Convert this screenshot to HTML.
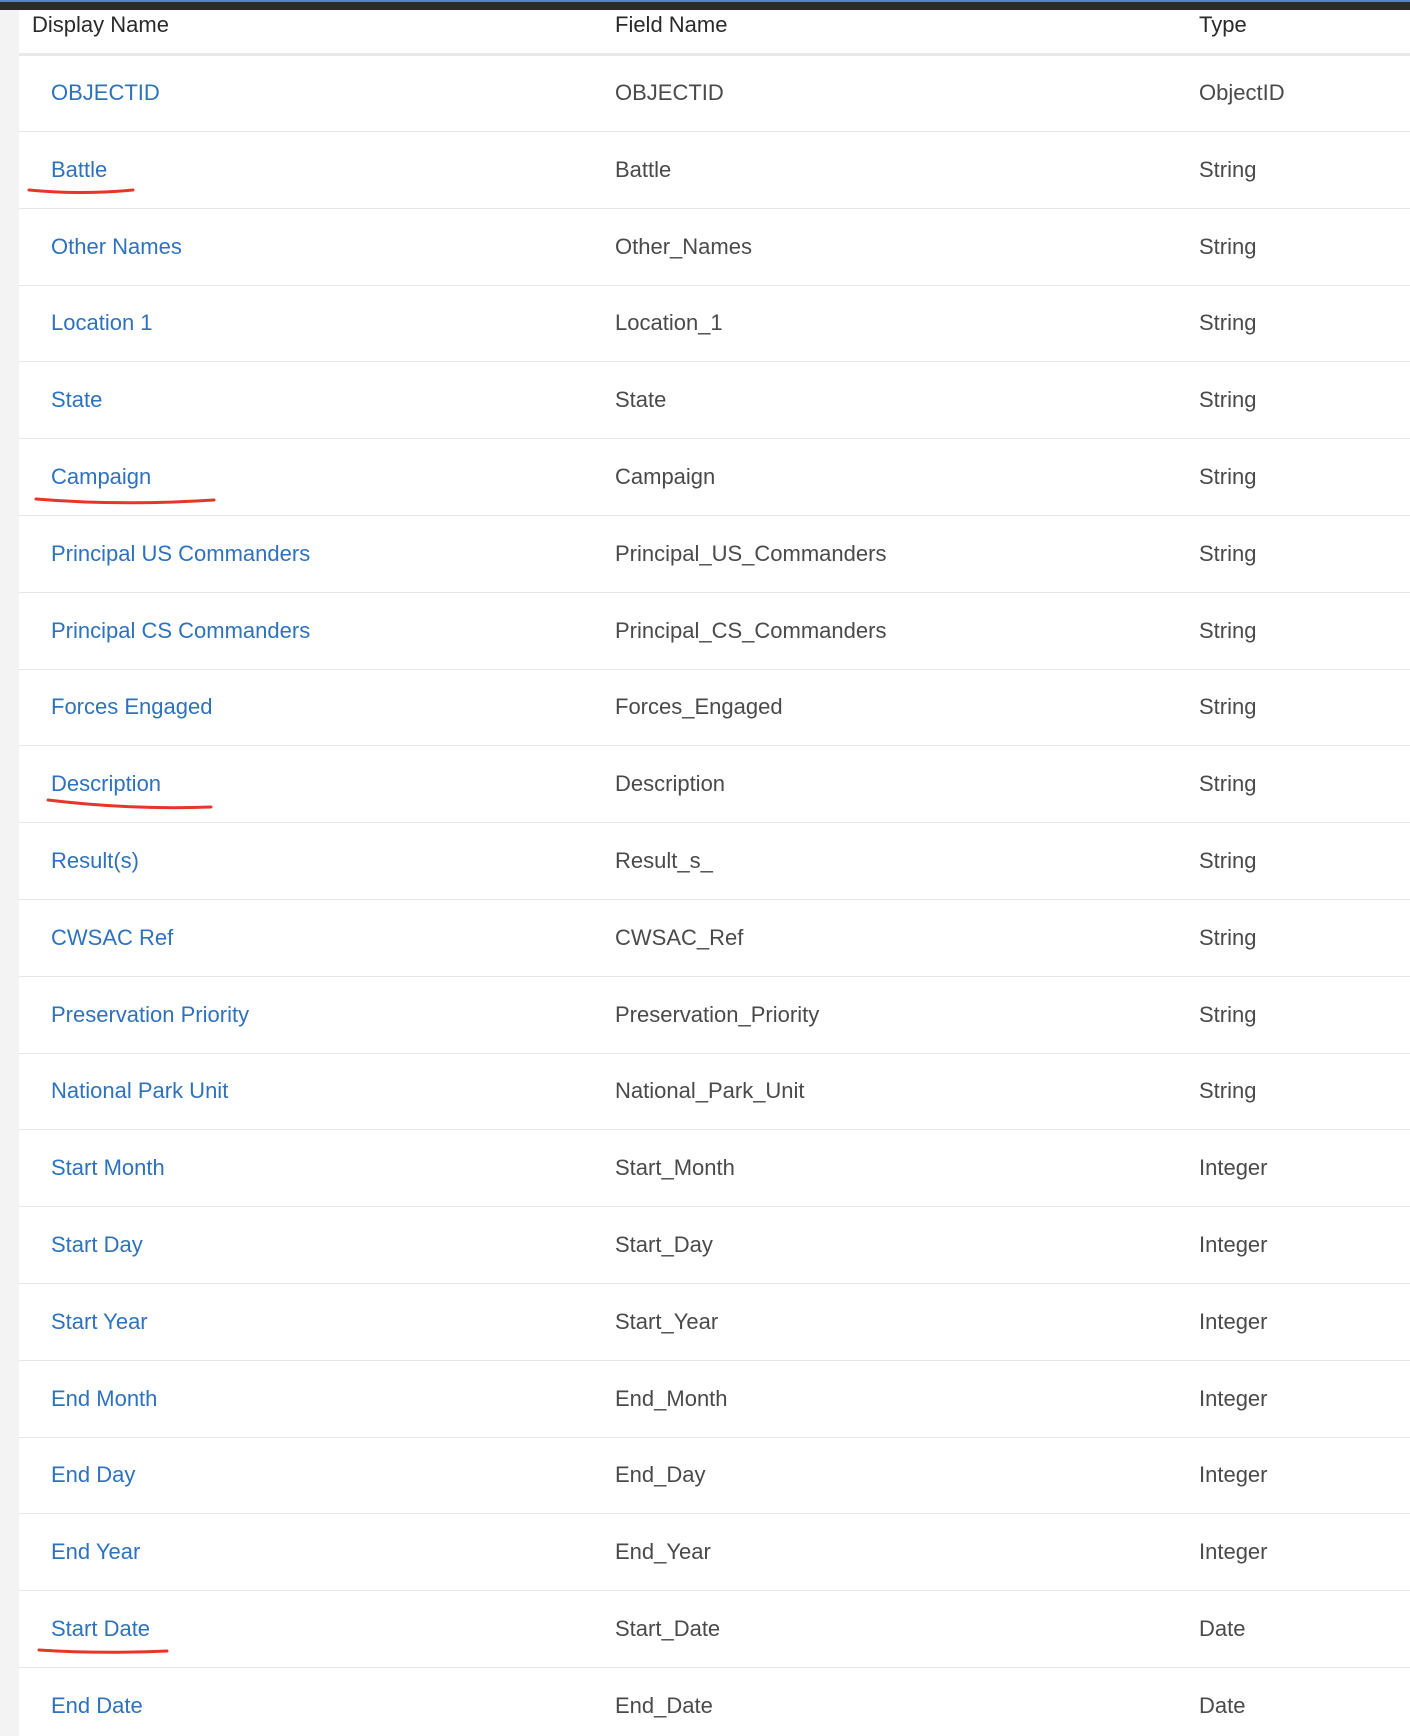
<!DOCTYPE html>
<html><head><meta charset="utf-8"><style>
html,body{margin:0;padding:0;width:1410px;height:1736px;overflow:hidden;background:#fff;font-family:"Liberation Sans",sans-serif;position:relative}
.top1{position:absolute;left:0;top:0;width:1410px;height:2px;background:#5b7fd0}
.top2{position:absolute;left:0;top:2px;width:1410px;height:8px;background:#2b2b2b}
.strip{position:absolute;left:0;top:10px;width:19px;height:1726px;background:#f3f3f3}
.hdr{position:absolute;left:19px;top:10px;width:1391px;height:43px;border-bottom:3px solid #e8e8e8}
.hdr span{position:absolute;top:1px;font-size:22px;color:#2a2a2a;line-height:28px}
.b{position:absolute;left:19px;width:1391px;height:1px;background:#e6e6e6}
.r{position:absolute;left:19px;width:1391px;height:26px}
.r span{position:absolute;top:1px;font-size:22px;line-height:26px;white-space:nowrap}
.r span:nth-child(1){left:32px;color:#2e72bd}
.r span:nth-child(2){left:596px;color:#4a4a4a}
.r span:nth-child(3){left:1180px;color:#4a4a4a}
</style></head><body>
<div class="top1"></div><div class="top2"></div><div class="strip"></div>
<div class="hdr"><span style="left:13px">Display Name</span><span style="left:596px">Field Name</span><span style="left:1180px">Type</span></div>

<div class="b" style="top:131px"></div>
<div class="b" style="top:207.8px"></div>
<div class="b" style="top:284.6px"></div>
<div class="b" style="top:361.4px"></div>
<div class="b" style="top:438.2px"></div>
<div class="b" style="top:515px"></div>
<div class="b" style="top:591.8px"></div>
<div class="b" style="top:668.6px"></div>
<div class="b" style="top:745.4px"></div>
<div class="b" style="top:822.2px"></div>
<div class="b" style="top:899px"></div>
<div class="b" style="top:975.8px"></div>
<div class="b" style="top:1052.6px"></div>
<div class="b" style="top:1129.4px"></div>
<div class="b" style="top:1206.2px"></div>
<div class="b" style="top:1283px"></div>
<div class="b" style="top:1359.8px"></div>
<div class="b" style="top:1436.6px"></div>
<div class="b" style="top:1513.4px"></div>
<div class="b" style="top:1590.2px"></div>
<div class="b" style="top:1667px"></div>

<div class="r" style="top:79px"><span>OBJECTID</span><span>OBJECTID</span><span>ObjectID</span></div>
<div class="r" style="top:155.8px"><span>Battle</span><span>Battle</span><span>String</span></div>
<div class="r" style="top:232.6px"><span>Other Names</span><span>Other_Names</span><span>String</span></div>
<div class="r" style="top:309.4px"><span>Location 1</span><span>Location_1</span><span>String</span></div>
<div class="r" style="top:386.2px"><span>State</span><span>State</span><span>String</span></div>
<div class="r" style="top:463px"><span>Campaign</span><span>Campaign</span><span>String</span></div>
<div class="r" style="top:539.8px"><span>Principal US Commanders</span><span>Principal_US_Commanders</span><span>String</span></div>
<div class="r" style="top:616.6px"><span>Principal CS Commanders</span><span>Principal_CS_Commanders</span><span>String</span></div>
<div class="r" style="top:693.4px"><span>Forces Engaged</span><span>Forces_Engaged</span><span>String</span></div>
<div class="r" style="top:770.2px"><span>Description</span><span>Description</span><span>String</span></div>
<div class="r" style="top:847px"><span>Result(s)</span><span>Result_s_</span><span>String</span></div>
<div class="r" style="top:923.8px"><span>CWSAC Ref</span><span>CWSAC_Ref</span><span>String</span></div>
<div class="r" style="top:1000.6px"><span>Preservation Priority</span><span>Preservation_Priority</span><span>String</span></div>
<div class="r" style="top:1077.4px"><span>National Park Unit</span><span>National_Park_Unit</span><span>String</span></div>
<div class="r" style="top:1154.2px"><span>Start Month</span><span>Start_Month</span><span>Integer</span></div>
<div class="r" style="top:1231px"><span>Start Day</span><span>Start_Day</span><span>Integer</span></div>
<div class="r" style="top:1307.8px"><span>Start Year</span><span>Start_Year</span><span>Integer</span></div>
<div class="r" style="top:1384.6px"><span>End Month</span><span>End_Month</span><span>Integer</span></div>
<div class="r" style="top:1461.4px"><span>End Day</span><span>End_Day</span><span>Integer</span></div>
<div class="r" style="top:1538.2px"><span>End Year</span><span>End_Year</span><span>Integer</span></div>
<div class="r" style="top:1615px"><span>Start Date</span><span>Start_Date</span><span>Date</span></div>
<div class="r" style="top:1691.8px"><span>End Date</span><span>End_Date</span><span>Date</span></div>

<svg style="position:absolute;left:0;top:0" width="1410" height="1736">
<g fill="none" stroke="#e8352a" stroke-width="3" stroke-linecap="round">
<path d="M29 190 Q80 195 133 190"/>
<path d="M36 499 Q120 506 214 500"/>
<path d="M48 800 Q130 810 211 807"/>
<path d="M39 1650 Q100 1654 167 1651"/>
</g></svg>
</body></html>
